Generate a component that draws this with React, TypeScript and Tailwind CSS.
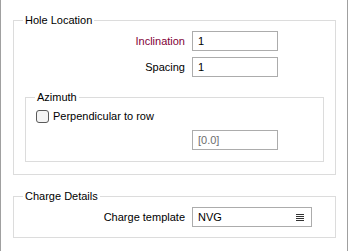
import React from "react";

function GroupBox({
  title,
  className,
  children,
}: {
  title: string;
  className: string;
  children: React.ReactNode;
}) {
  return (
    <div className={`relative border border-[#dcdcdc] ${className}`}>
      <span className="absolute -top-[8px] left-[9px] bg-white px-[2px] leading-[14px] text-black">
        {title}
      </span>
      {children}
    </div>
  );
}

function TextBox({ value, className = "", muted = false }: { value: string; className?: string; muted?: boolean }) {
  return (
    <div
      className={`flex h-[20px] items-center border border-[#acacac] bg-white pl-[5px] leading-none ${
        muted ? "text-[#6d6d6d]" : "text-black"
      } ${className}`}
    >
      {value}
    </div>
  );
}

function FieldRow({
  label,
  labelClass = "text-black",
  children,
  labelWidth,
}: {
  label: string;
  labelClass?: string;
  children: React.ReactNode;
  labelWidth: string;
}) {
  return (
    <div className="flex items-center">
      <div className={`${labelWidth} pr-[7px] text-right ${labelClass}`}>{label}</div>
      {children}
    </div>
  );
}

export default function App() {
  return (
    <div
      className="h-[251px] w-[352px] bg-white text-[11px]"
      style={{ fontFamily: '"Liberation Sans", Arial, sans-serif' }}
    >
      <div className="h-full w-[348px] border-x border-[#a0a0a0] pl-[12px] pt-[20px]">
        {/* Hole Location */}
        <GroupBox title="Hole Location" className="h-[155px] w-[323px]">
          <div className="flex flex-col gap-[6px] pt-[10px]">
            <FieldRow label="Inclination" labelClass="text-[#7f0037]" labelWidth="w-[178px]">
              <TextBox value="1" className="w-[86px]" />
            </FieldRow>
            <FieldRow label="Spacing" labelWidth="w-[178px]">
              <TextBox value="1" className="w-[86px]" />
            </FieldRow>
          </div>

          {/* Azimuth */}
          <GroupBox title="Azimuth" className="ml-[11px] mt-[20px] h-[65px] w-[299px]">
            <div className="flex items-center pl-[10px] pt-[12px]">
              <div className="h-[13px] w-[13px] rounded-[3px] border border-[#5a5a5a] bg-[#f4f4f4]" />
              <span className="ml-[4px] leading-[13px] text-black">Perpendicular to row</span>
            </div>
            <div className="mt-[7px] pl-[166px]">
              <TextBox value="[0.0]" muted className="w-[86px]" />
            </div>
          </GroupBox>
        </GroupBox>

        {/* Charge Details */}
        <GroupBox title="Charge Details" className="mt-[21px] h-[42px] w-[323px]">
          <div className="pt-[10px]">
            <FieldRow label="Charge template" labelWidth="w-[178px]">
              <div className="flex h-[20px] w-[120px] items-center justify-between border border-[#acacac] bg-white pl-[5px] pr-[7px] leading-none text-black">
                <span>NVG</span>
                <svg width="8" height="7" viewBox="0 0 8 7">
                  <rect x="0" y="0" width="8" height="1" fill="#333" />
                  <rect x="0" y="2" width="8" height="1" fill="#333" />
                  <rect x="0" y="4" width="8" height="1" fill="#333" />
                  <rect x="0" y="6" width="8" height="1" fill="#333" />
                </svg>
              </div>
            </FieldRow>
          </div>
        </GroupBox>
      </div>
    </div>
  );
}
